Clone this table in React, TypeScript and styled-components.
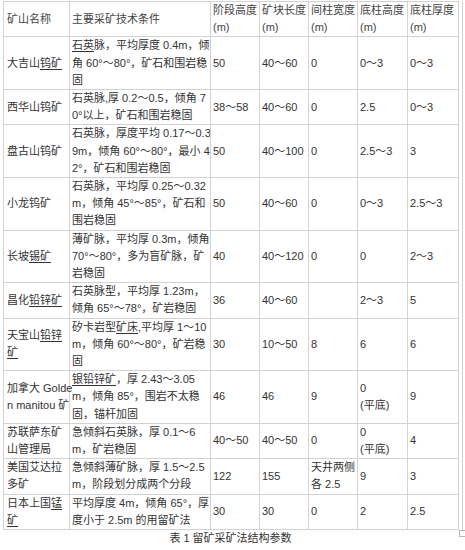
import React from 'react';
import styled, { createGlobalStyle } from 'styled-components';

const GlobalStyle = createGlobalStyle`
    html, body {
        margin: 0;
        padding: 0;
        background: #ffffff;
    }
    body {
        font-family: "Liberation Sans", "Noto Sans CJK SC", sans-serif;
        color: #333333;
        font-size: 11px;
    }
`;

const Page = styled.div`
    width: 465px;
    height: 550px;
    padding-top: 1px;
    box-sizing: border-box;
`;

const Frame = styled.div`
    position: relative;
    width: 463px;
    box-sizing: border-box;
    padding-left: 3px;
    border-right: 1px solid #cfcfcf;
`;

const Corner = styled.span`
    position: absolute;
    right: -4px;
    bottom: -7px;
    width: 5px;
    height: 5px;
    border: 1px solid #b5b5b5;
    background: #ffffff;
`;

const Table = styled.table`
    width: 455px;
    table-layout: fixed;
    border-collapse: collapse;
    border: 1px solid #d2d2d2;
`;

const Cell = styled.td<{ $first?: boolean }>`
    border: 1px solid #d2d2d2;
    padding: 0 0 0 ${props => (props.$first ? '3px' : '2px')};
    line-height: 17.2px;
    vertical-align: middle;
    white-space: nowrap;
    overflow: ${props => (props.$first ? 'visible' : 'hidden')};
    font-size: 11px;
    color: #333333;
`;

const HeadCell = styled(Cell).attrs({ as: 'th' })`
    font-weight: normal;
    text-align: left;
    color: #444444;
`;

const U = styled.span`
    text-decoration: underline;
    text-underline-offset: 2px;
`;

const Caption = styled.div`
    width: 455px;
    margin-left: 3px;
    text-align: center;
    font-size: 11px;
    line-height: 15px;
    padding-top: 1px;
    color: #333333;
`;

const widths = [66, 141, 49, 49, 49, 50, 51];

const heads = ['矿山名称', '主要采矿技术条件', '阶段高度', '矿块长度', '间柱宽度', '底柱高度', '底柱厚度'];

type Row = {
    name: React.ReactNode;
    cond: React.ReactNode;
    values: React.ReactNode[];
};

const rows: Row[] = [
    {
        name: <>大吉山<U>钨矿</U></>,
        cond: <><U>石英</U>脉，平均厚度 0.4m，倾<br />角 60°～80°，矿石和围岩稳<br />固</>,
        values: ['50', '40～60', '0', '0～3', '0～3'],
    },
    {
        name: '西华山钨矿',
        cond: <>石英脉,厚 0.2～0.5，倾角 7<br />0°以上，矿石和围岩稳固</>,
        values: ['38～58', '40～60', '0', '2.5', '0～3'],
    },
    {
        name: '盘古山钨矿',
        cond: <>石英脉，厚度平均 0.17～0.3<br />9m，倾角 60°～80°，最小 4<br />2°，矿石和围岩稳固</>,
        values: ['50', '40～100', '0', '2.5～3', '3'],
    },
    {
        name: '小龙钨矿',
        cond: <>石英脉，平均厚 0.25～0.32<br />m，倾角 45°～85°，矿石和<br />围岩稳固</>,
        values: ['50', '40～60', '0', '0～3', '2.5～3'],
    },
    {
        name: <>长坡<U>锡矿</U></>,
        cond: <>薄矿脉，平均厚 0.3m，倾角<br />70°～80°，多为盲矿脉，矿<br />岩稳固</>,
        values: ['40', '40～120', '0', '0', '2～3'],
    },
    {
        name: <>昌化<U>铅锌矿</U></>,
        cond: <>石英脉型，平均厚 1.23m，<br />倾角 65°～78°，矿岩稳固</>,
        values: ['36', '40～60', '', '2～3', '5'],
    },
    {
        name: <>天宝山<U>铅锌</U><br /><U>矿</U></>,
        cond: <>矽卡岩型<U>矿床</U>,平均厚 1～10<br />m，倾角 60°～80°，矿岩稳<br />固</>,
        values: ['30', '10～50', '8', '6', '6'],
    },
    {
        name: <>加拿大 Golde<br />n manitou 矿</>,
        cond: <><U>银铅锌矿</U>，厚 2.43～3.05<br />m，倾角 85°，围岩不太稳<br />固，锚杆加固</>,
        values: ['46', '46', '9', <>0<br />(平底)</>, '9'],
    },
    {
        name: <>苏联萨东矿<br />山管理局</>,
        cond: <>急倾斜石英脉，厚 0.1～6<br />m，矿岩稳固</>,
        values: ['40～50', '40～50', '0', <>0<br />(平底)</>, '4'],
    },
    {
        name: <>美国艾达拉<br />多矿</>,
        cond: <>急倾斜薄矿脉，厚 1.5～2.5<br />m，阶段划分成两个分段</>,
        values: ['122', '155', <>天井两侧<br />各 2.5</>, '9', '3'],
    },
    {
        name: <>日本上国<U>锰</U><br /><U>矿</U></>,
        cond: <>平均厚度 4m，倾角 65°，厚<br />度小于 2.5m 的用留矿法</>,
        values: ['30', '30', '0', '2', '2.5'],
    },
];

const App = () => {
    return (
        <Page>
            <GlobalStyle />
            <Frame>
                <Table>
                    <colgroup>
                        {widths.map((w, i) => (
                            <col key={i} style={{ width: w }} />
                        ))}
                    </colgroup>
                    <thead>
                        <tr>
                            {heads.map((h, i) => (
                                <HeadCell key={h} $first={i === 0}>
                                    {h}
                                    {i > 1 && (
                                        <>
                                            <br />
                                            (m)
                                        </>
                                    )}
                                </HeadCell>
                            ))}
                        </tr>
                    </thead>
                    <tbody>
                        {rows.map((row, r) => (
                            <tr key={r}>
                                <Cell $first>{row.name}</Cell>
                                <Cell>{row.cond}</Cell>
                                {row.values.map((v, i) => (
                                    <Cell key={i}>{v}</Cell>
                                ))}
                            </tr>
                        ))}
                    </tbody>
                </Table>
                <Corner />
            </Frame>
            <Caption>表 1 留矿采矿法结构参数</Caption>
        </Page>
    );
};

export default App;
